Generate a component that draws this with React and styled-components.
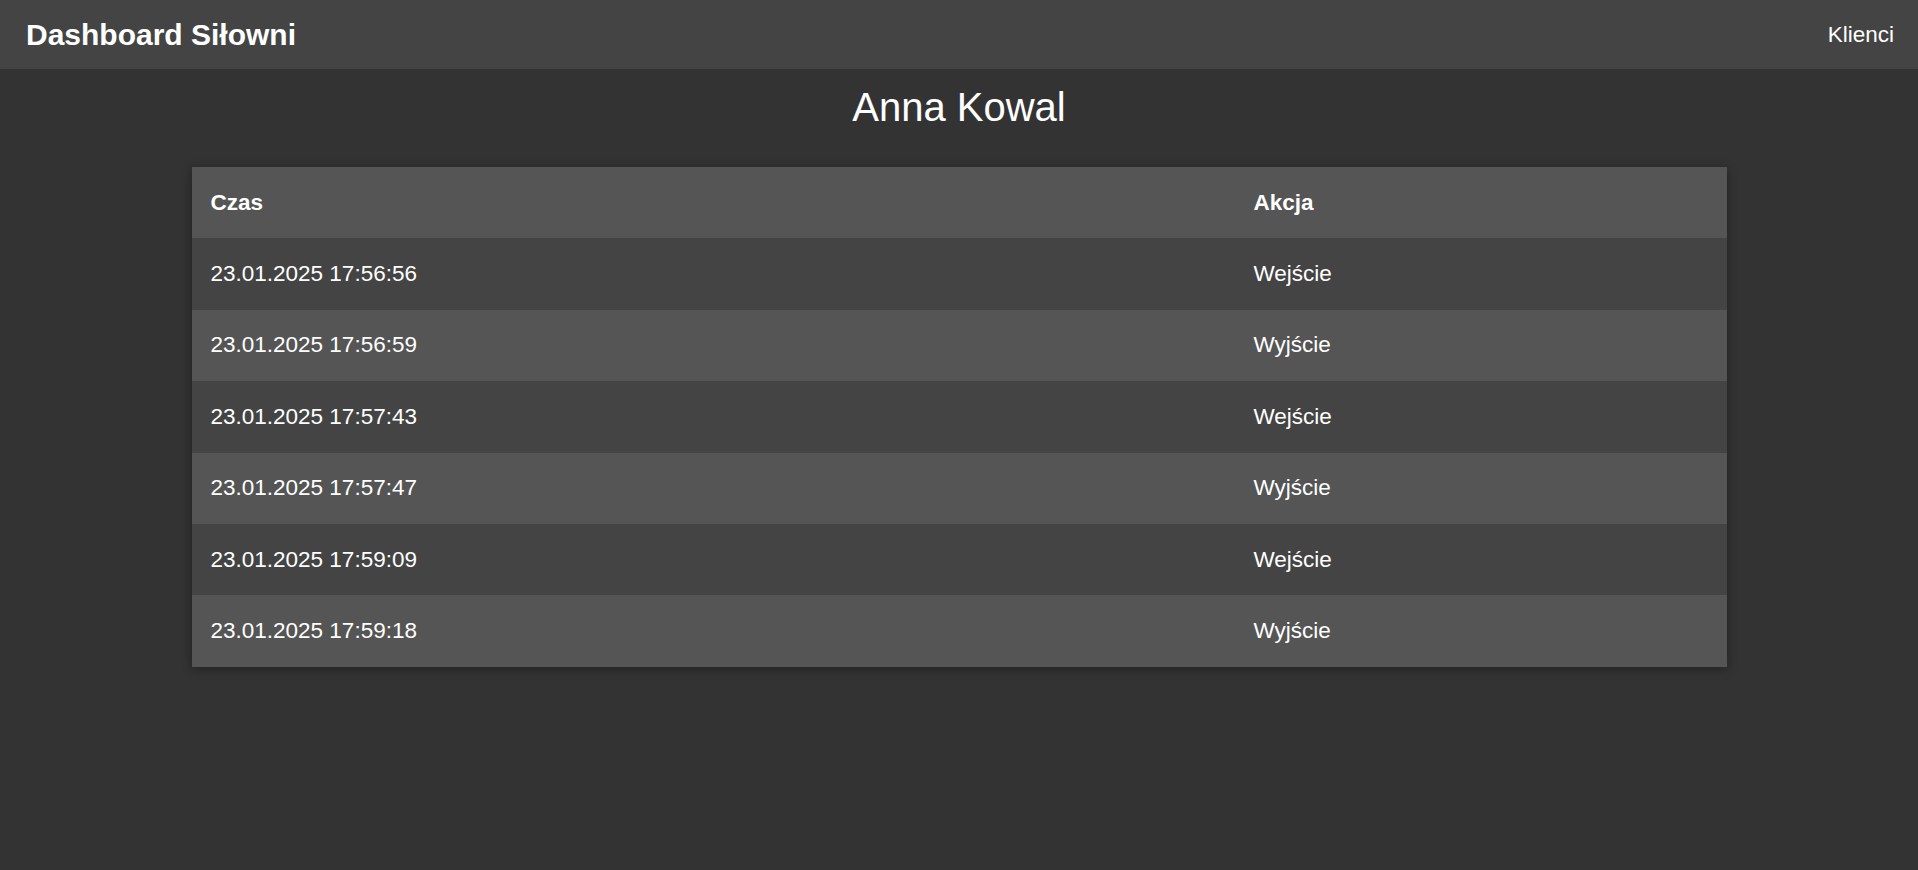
import React from "react";
import styled, { createGlobalStyle } from "styled-components";

const GlobalStyle = createGlobalStyle`
  html, body {
    margin: 0;
    padding: 0;
    background: #333333;
    color: #ffffff;
    font-family: "Liberation Sans", Arial, sans-serif;
  }
  #root {
    min-height: 100vh;
  }
`;

const Page = styled.div`
  min-height: 100vh;
  background: #333333;
  display: flex;
  flex-direction: column;
`;

const NavBar = styled.header`
  height: 69px;
  background: #444444;
  display: flex;
  align-items: center;
  justify-content: space-between;
  padding: 0 24px 0 26px;
  box-sizing: border-box;
`;

const Brand = styled.div`
  font-size: 30px;
  font-weight: bold;
  color: #ffffff;
`;

const NavLink = styled.a`
  font-size: 22.5px;
  color: #ffffff;
  text-decoration: none;
  cursor: pointer;
`;

const Main = styled.main`
  display: flex;
  flex-direction: column;
  align-items: center;
`;

const Title = styled.h1`
  margin: 15px 0 0;
  font-size: 40px;
  font-weight: normal;
  line-height: 46px;
  color: #ffffff;
`;

const Table = styled.table`
  margin-top: 37px;
  width: 1535px;
  border-collapse: collapse;
  box-shadow: 0 2px 10px rgba(0, 0, 0, 0.35);
`;

const HeadCell = styled.th`
  box-sizing: border-box;
  text-align: left;
  font-weight: bold;
  font-size: 22.5px;
  line-height: 26px;
  padding: 22.7px 19px;
  background: #555555;
  color: #ffffff;
  width: ${(p) => p.$w || "auto"};
`;

const Row = styled.tr`
  background: ${(p) => (p.$alt ? "#555555" : "#444444")};
`;

const Cell = styled.td`
  font-size: 22.5px;
  line-height: 26px;
  padding: 22.7px 19px;
  color: #ffffff;
`;

const entries = [
  ["23.01.2025 17:56:56", "Wejście"],
  ["23.01.2025 17:56:59", "Wyjście"],
  ["23.01.2025 17:57:43", "Wejście"],
  ["23.01.2025 17:57:47", "Wyjście"],
  ["23.01.2025 17:59:09", "Wejście"],
  ["23.01.2025 17:59:18", "Wyjście"],
];

export default function App() {
  return (
    <>
      <GlobalStyle />
      <Page>
        <NavBar>
          <Brand>Dashboard Siłowni</Brand>
          <NavLink>Klienci</NavLink>
        </NavBar>
        <Main>
          <Title>Anna Kowal</Title>
          <Table>
            <thead>
              <tr>
                <HeadCell $w="1043px">Czas</HeadCell>
                <HeadCell>Akcja</HeadCell>
              </tr>
            </thead>
            <tbody>
              {entries.map(([time, action], i) => (
                <Row key={time} $alt={i % 2 === 1}>
                  <Cell>{time}</Cell>
                  <Cell>{action}</Cell>
                </Row>
              ))}
            </tbody>
          </Table>
        </Main>
      </Page>
    </>
  );
}
